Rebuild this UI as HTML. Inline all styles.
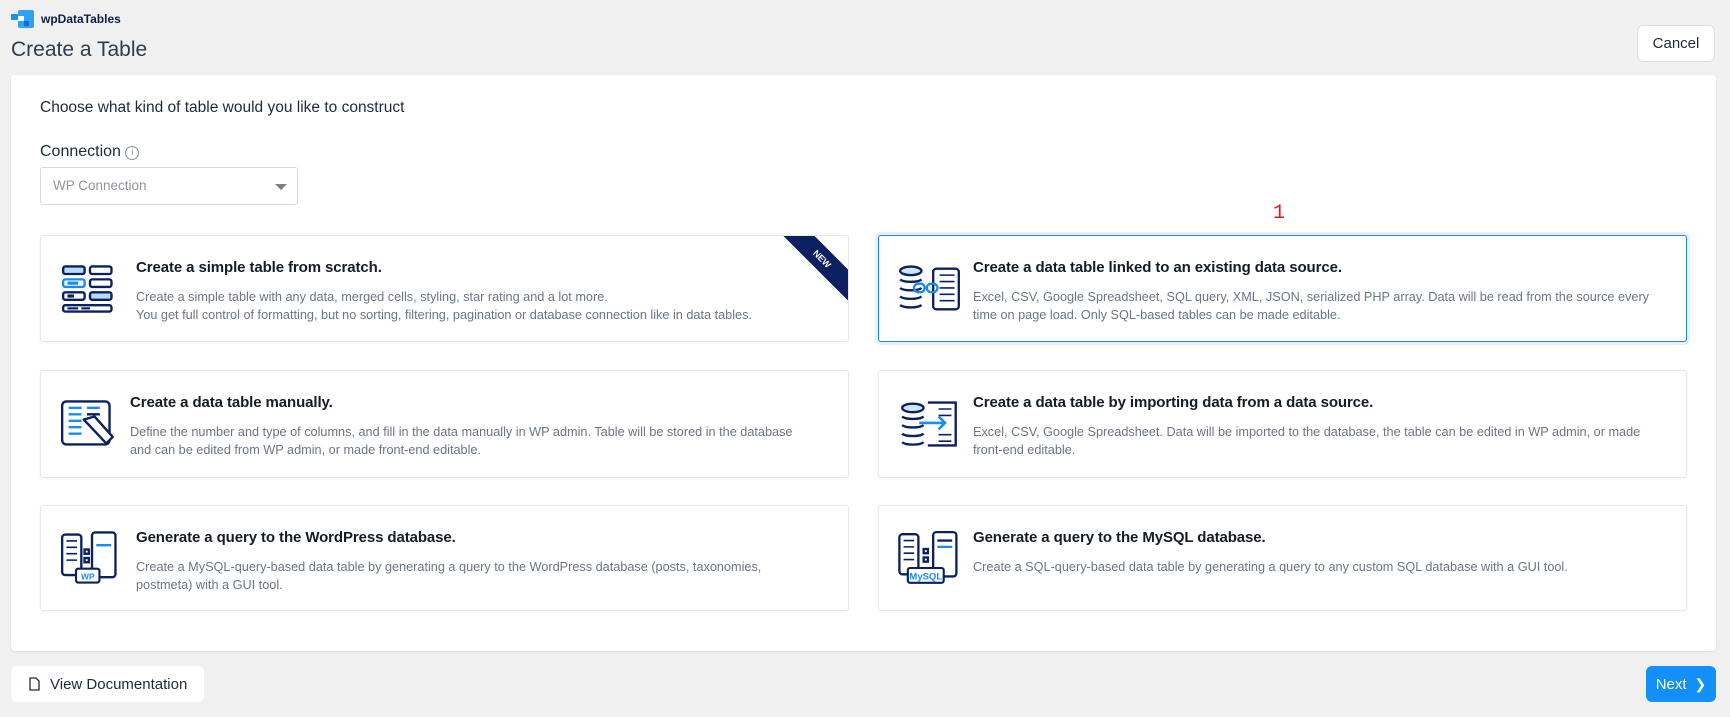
<!DOCTYPE html>
<html><head><meta charset="utf-8"><style>
*{box-sizing:border-box;margin:0;padding:0}
body{width:1730px;height:717px;background:#f0f0f1;font-family:"Liberation Sans",sans-serif;position:relative;overflow:hidden;color:#1e2a38}
.abs{position:absolute}
.logo-t{left:41px;top:12px;font-size:12px;font-weight:bold;color:#0b1f4a}
.title{left:11px;top:38px;font-size:21px;color:#2b3e50}
.btn{position:absolute;background:#fff;border-radius:6px;font-size:15px;color:#1e2a38;display:flex;align-items:center;justify-content:center}
.panel{left:11px;top:75px;width:1705px;height:576px;background:#fff;border-radius:4px;box-shadow:0 1px 2px rgba(0,0,0,.08)}
.card{position:absolute;background:#fff;border:1px solid #e6e8eb;border-radius:3px;box-shadow:0 1px 3px rgba(0,0,0,.05);overflow:hidden}
.card.sel{border-color:#1a86e8;box-shadow:0 0 0 3px #e6f0fb}
.card h3{position:absolute;font-size:15px;font-weight:bold;color:#141c26;top:23px;letter-spacing:-.1px}
.card p{position:absolute;font-size:12.7px;color:#6a7685;top:52px;line-height:18px}
.card svg{position:absolute}
</style></head><body>
<svg class="abs" style="left:11px;top:10px" width="23" height="18" viewBox="0 0 23 18"><rect x="0" y="4" width="7" height="6" fill="#1594f0"/><rect x="7" y="0" width="16" height="18" rx="2" fill="#2ea3f2"/><rect x="7" y="6" width="6" height="5" fill="#fff"/><rect x="13" y="11" width="5" height="5" fill="#0d6fcf"/></svg>
<div class="abs logo-t">wpDataTables</div>
<div class="abs title">Create a Table</div>
<div class="btn" style="left:1637px;top:25px;width:78px;height:37px;border:1px solid #dcdfe3">Cancel</div>
<div class="abs panel"></div>
<div class="abs" style="left:40px;top:99px;font-size:15.5px;color:#1e2a38">Choose what kind of table would you like to construct</div>
<div class="abs" style="left:40px;top:143px;font-size:16px;color:#1e2a38">Connection <span style="display:inline-block;width:14px;height:14px;border:1px solid #8a95a3;border-radius:50%;font-size:10px;text-align:center;line-height:12px;color:#8a95a3;vertical-align:1px">i</span></div>
<div class="abs" style="left:40px;top:167px;width:258px;height:38px;border:1px solid #d5d9de;border-radius:3px;font-size:13.5px;color:#8e959e;padding:10px 12px">WP Connection<span class="abs" style="right:10px;top:16px;border-left:6px solid transparent;border-right:6px solid transparent;border-top:6px solid #7b8088"></span></div>
<div class="abs" style="left:1273px;top:202px;font-size:20px;color:#e8161b;font-family:'Liberation Mono',monospace">1</div>

<div class="card" style="left:40px;top:235px;width:809px;height:107px">
<svg style="left:20px;top:28px" width="58" height="49" viewBox="0 0 54 45"><g stroke="#0b2060" stroke-width="2.2" fill="none"><rect x="2" y="2" width="20" height="7" rx="2" fill="#b7dcf9"/><rect x="27" y="2" width="20" height="7" rx="2"/><rect x="2" y="14" width="20" height="7" rx="2" stroke="#1a8cf0"/><rect x="27" y="14" width="20" height="7" rx="2"/><rect x="2" y="26" width="20" height="7" rx="2"/><rect x="27" y="26" width="20" height="7" rx="2" fill="#b7dcf9"/><rect x="2" y="38" width="45" height="6" rx="2"/></g><rect x="6" y="16" width="10" height="3" fill="#1a8cf0"/><rect x="6" y="28" width="6" height="3" fill="#0b2060"/><rect x="6" y="40" width="10" height="2" fill="#0b2060"/><rect x="19" y="40" width="8" height="2" fill="#0b2060"/></svg>
<h3 style="left:95px">Create a simple table from scratch.</h3>
<p style="left:95px">Create a simple table with any data, merged cells, styling, star rating and a lot more.<br>You get full control of formatting, but no sorting, filtering, pagination or database connection like in data tables.</p>
<div class="abs" style="right:-24px;top:12px;width:100px;height:22px;background:#0b2060;transform:rotate(45deg);color:#fff;font-size:9px;font-weight:bold;text-align:center;line-height:22px">NEW</div>
</div>
<div class="card sel" style="left:878px;top:235px;width:809px;height:107px">
<svg style="left:19px;top:28px" width="64" height="50" viewBox="0 0 60 46"><g stroke="#0b2060" stroke-width="2.2" fill="none"><ellipse cx="12" cy="6" rx="10" ry="4" fill="#cfe7fb"/><path d="M2 14c3 3 17 3 20 0M2 22c3 3 17 3 20 0M2 30c3 3 17 3 20 0M2 38c3 3 17 3 20 0"/><rect x="33" y="4" width="24" height="38" rx="3"/><path d="M39 10h14M39 16h14M39 22h14M39 28h14M39 34h14" stroke-width="1.5"/></g><g stroke="#1a8cf0" stroke-width="2.2" fill="none"><rect x="15" y="18" width="10" height="8" rx="4"/><rect x="27" y="18" width="10" height="8" rx="4"/></g></svg>
<h3 style="left:94px">Create a data table linked to an existing data source.</h3>
<p style="left:94px">Excel, CSV, Google Spreadsheet, SQL query, XML, JSON, serialized PHP array. Data will be read from the source every<br>time on page load. Only SQL-based tables can be made editable.</p>
</div>
<div class="card" style="left:40px;top:370px;width:809px;height:108px">
<svg style="left:19px;top:28px" width="56" height="50" viewBox="0 0 52 46"><g fill="none" stroke-width="2.2"><rect x="2" y="2" width="44" height="40" rx="4" stroke="#0b2060"/><path d="M8 8h12M25 8h12M8 14h12M8 20h12M8 26h12M8 32h12" stroke="#1a8cf0"/><path d="M25 14h12" stroke="#0b2060"/><path d="M22 19l10-3 17 19-6 6-17-18z" stroke="#0b2060" fill="#fff" stroke-linejoin="round"/></g></svg>
<h3 style="left:89px">Create a data table manually.</h3>
<p style="left:89px">Define the number and type of columns, and fill in the data manually in WP admin. Table will be stored in the database<br>and can be edited from WP admin, or made front-end editable.</p>
</div>
<div class="card" style="left:878px;top:370px;width:809px;height:108px">
<svg style="left:21px;top:28px" width="60" height="50" viewBox="0 0 56 46"><g stroke="#0b2060" stroke-width="2.2" fill="none"><ellipse cx="12" cy="8" rx="10" ry="4" fill="#cfe7fb"/><path d="M2 16c3 3 17 3 20 0M2 24c3 3 17 3 20 0M2 32c3 3 17 3 20 0M2 40c3 3 17 3 20 0"/><path d="M26 3h26v40H26"/><path d="M36 9h12M36 15h12M36 33h12M36 39h12" stroke-width="1.5"/></g><path d="M18 22h24M36 16l6 6-6 6" stroke="#1a8cf0" stroke-width="2.4" fill="none"/></svg>
<h3 style="left:94px">Create a data table by importing data from a data source.</h3>
<p style="left:94px">Excel, CSV, Google Spreadsheet. Data will be imported to the database, the table can be edited in WP admin, or made<br>front-end editable.</p>
</div>
<div class="card" style="left:40px;top:505px;width:809px;height:106px">
<svg style="left:19px;top:24px" width="64" height="56" viewBox="0 0 60 52"><g stroke="#0b2060" stroke-width="2.2" fill="none"><rect x="2" y="4" width="18" height="38" rx="3"/><rect x="30" y="2" width="22" height="42" rx="3"/><path d="M6 10h10M6 16h10M6 22h10M6 28h10" stroke-width="1.5"/><rect x="23" y="18" width="4" height="4"/><rect x="23" y="26" width="4" height="4"/><path d="M34 14h14" stroke="#1a8cf0"/></g><rect x="15" y="36" width="22" height="13" rx="2" fill="#fff" stroke="#0b2060" stroke-width="2"/><text x="26" y="46" font-size="8" font-weight="bold" fill="#1a8cf0" text-anchor="middle" font-family="Liberation Sans">WP</text></svg>
<h3 style="left:95px">Generate a query to the WordPress database.</h3>
<p style="left:95px">Create a MySQL-query-based data table by generating a query to the WordPress database (posts, taxonomies,<br>postmeta) with a GUI tool.</p>
</div>
<div class="card" style="left:878px;top:505px;width:809px;height:106px">
<svg style="left:18px;top:24px" width="66" height="57" viewBox="0 0 62 54"><g stroke="#0b2060" stroke-width="2.2" fill="none"><rect x="2" y="4" width="18" height="38" rx="3"/><rect x="34" y="2" width="22" height="42" rx="3"/><path d="M6 10h10M6 16h10M6 22h10M6 28h10" stroke-width="1.5"/><rect x="25" y="18" width="4" height="4"/><rect x="25" y="26" width="4" height="4"/><path d="M38 10h14" /><path d="M38 16h14" stroke="#1a8cf0"/></g><rect x="10" y="36" width="34" height="14" rx="2" fill="#fff" stroke="#0b2060" stroke-width="2"/><text x="27" y="47" font-size="9" font-weight="bold" fill="#1a8cf0" text-anchor="middle" font-family="Liberation Sans">MySQL</text></svg>
<h3 style="left:94px">Generate a query to the MySQL database.</h3>
<p style="left:94px">Create a SQL-query-based data table by generating a query to any custom SQL database with a GUI tool.</p>
</div>

<div class="btn" style="left:11px;top:666px;width:193px;height:36px;justify-content:flex-start;padding-left:18px"><svg width="11" height="14" viewBox="0 0 11 14" style="margin-right:10px"><path d="M1 1h6l3 3v9H1z" fill="none" stroke="#1e2a38" stroke-width="1.3"/></svg>View Documentation</div>
<div class="btn" style="left:1646px;top:666px;width:70px;height:36px;background:#1390f7;color:#fff">Next <span style="margin-left:8px;font-size:14px">&#x276F;</span></div>
</body></html>
